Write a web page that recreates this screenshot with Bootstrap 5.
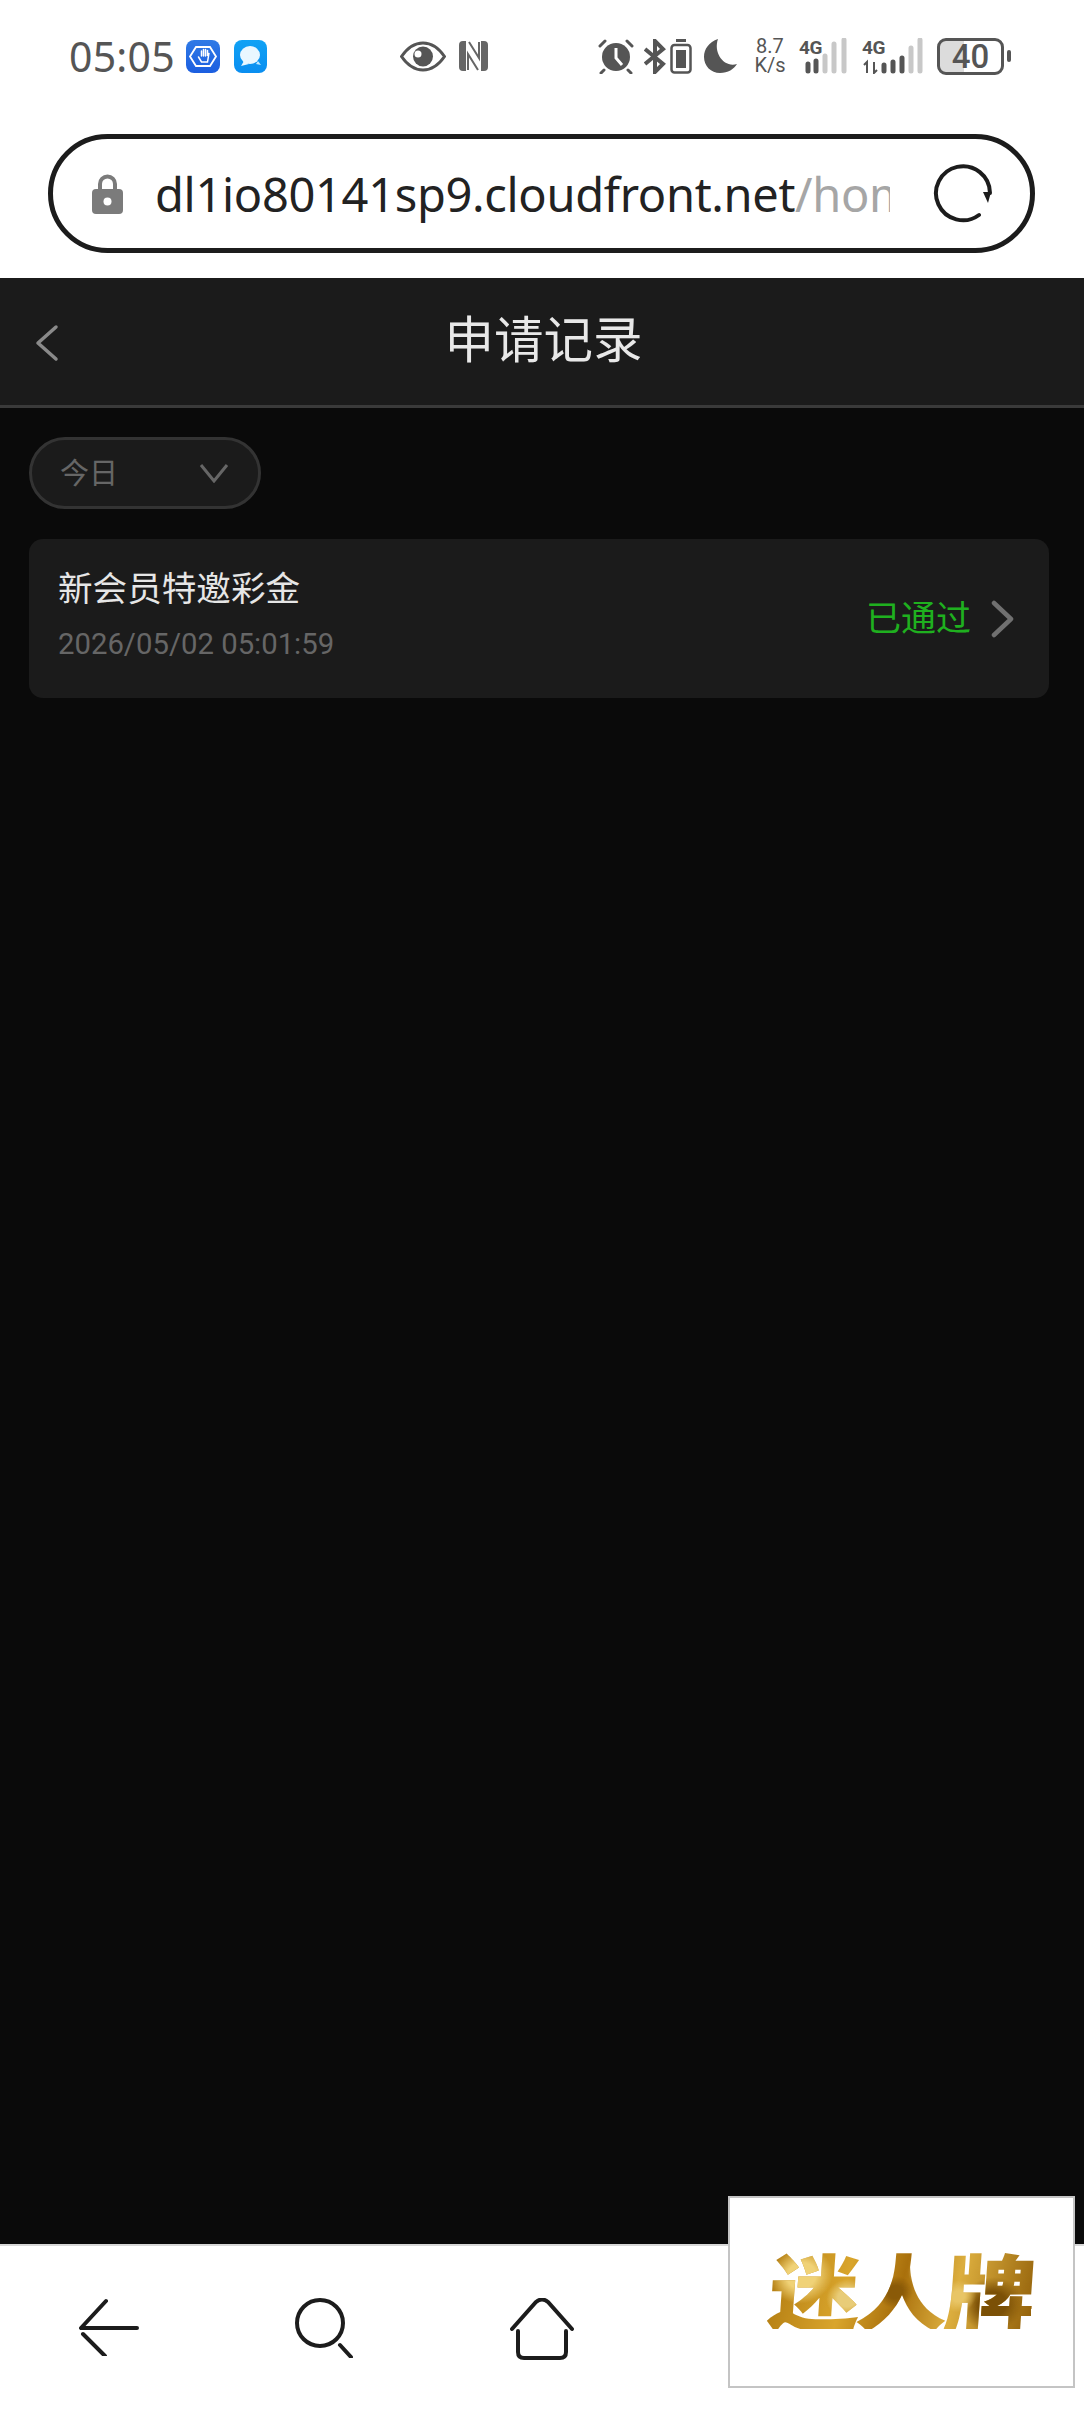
<!DOCTYPE html>
<html lang="zh">
<head>
<meta charset="utf-8">
<title>申请记录</title>
<link rel="stylesheet" href="https://cdn.jsdelivr.net/npm/bootstrap@5.3.0/dist/css/bootstrap.min.css">
<style>
html,body{margin:0;height:2412px;overflow:hidden;background:#0a0a0a}
body{font-family:"Noto Sans","Noto Sans CJK SC",sans-serif}
.shell{height:2412px}
.sbar{height:112px;padding:0 0 0 69px;background:#fff;color:#555}
.sbar svg{display:block;flex:none}
.clock{font-size:41px;line-height:1;width:117px;letter-spacing:.2px;font-family:"Noto Sans",sans-serif}
.gap-msg{margin-left:14px}
.eye{margin-left:133px}
.nfc{margin-left:12px}
.alarm{margin-left:109px}
.bt{margin-left:10px}
.cell{margin-left:3px}
.moon{margin-left:12px}
.speed{margin-left:15px;width:36px;font-size:20px;line-height:19px;text-align:center;color:#555;font-family:"Roboto",sans-serif}
.sig1{margin-left:11px;width:50px}
.sig2{margin-left:13px;width:63px}
.sigbox{position:relative;height:36px}
.sigtxt{font:700 19px/1 "Roboto",sans-serif;color:#555;letter-spacing:-.5px;display:block}
.batt{margin-left:12px;width:67px;height:37px;border:3px solid #555;border-radius:9px;font:500 33px/31px "Roboto",sans-serif;color:#555;text-align:center;background:linear-gradient(90deg,#dcdcdc 0 40%,#fff 40%)}
.batt-tip{width:4px;height:12px;border-radius:2px;background:#555;margin-left:3px}
.urlwrap{height:166px;padding:22px 49px 25px 48px;background:#fff}
.urlpill{height:119px;border:5px solid #1c1c1c;border-radius:60px;padding:0 37px 0 39px}
.urltxt{width:735px;margin-left:32px;overflow:hidden;white-space:nowrap;font-size:47px;line-height:60px;color:#222;font-family:"Noto Sans",sans-serif;letter-spacing:-.32px}
.urltxt span{color:#a6a6a6}
.pagehead{height:130px;background:#1b1b1b;border-bottom:3px solid #3a3a3a;position:relative}
.pagehead h1{font-size:49.5px;line-height:1;font-weight:400;color:#e8e8e8;margin:0 0 3px 3px}
.backbtn{position:absolute;left:35px;top:46px}
.mainarea{height:1836px;background:#0a0a0a;padding:29px 35px 0 29px}
.pickbox{width:232px;height:72px;background:#1b1b1b;border:3px solid #333;border-radius:36px;padding:0 29px 0 28px;color:#666;font-size:29px}
.reccard{height:159px;margin-top:30px;background:#1b1b1b;border-radius:14px;padding:0 35px 0 29px}
.recbody{padding-bottom:10px}
.rectitle{font-size:34.6px;line-height:46px;color:#e6e6e6}
.recdate{font-size:29.3px;line-height:38px;color:#666;margin-top:14px;font-family:"Roboto",sans-serif}
.recstate{font-size:35px;color:#1fb01f;margin-right:20px}
.botnav{height:168px;background:#fff;border-top:2px solid #d8d8d8;position:relative}
.navico{position:absolute;top:52px}
.promo{position:absolute;left:728px;bottom:24px;width:347px;height:192px;background:#fff;border:2px solid #c4c4c4}
.promotxt{font:900 92px/1 "Noto Sans CJK SC",sans-serif;letter-spacing:-4px;transform:skewX(-4deg) scaleY(.9);
background:radial-gradient(circle at 12% 35%,#f0d277 0 6%,transparent 13%),radial-gradient(circle at 30% 62%,#e8cc78 0 5%,transparent 11%),radial-gradient(circle at 48% 55%,#8a5a08 0 5%,transparent 12%),radial-gradient(circle at 60% 30%,#eed48a 0 5%,transparent 12%),radial-gradient(circle at 72% 60%,#e8c566 0 3%,transparent 9%),radial-gradient(circle at 85% 70%,#7b5006 0 6%,transparent 13%),linear-gradient(100deg,#b07a10,#d9a52c 30%,#a9700c 50%,#dcae3e 70%,#93610a);
-webkit-background-clip:text;background-clip:text;color:transparent}
</style>
</head>
<body>
<div class="shell d-flex flex-column">
  <div class="sbar d-flex align-items-center">
    <span class="clock">05:05</span>
    <svg width="34" height="33" viewBox="0 0 34 33"><defs><linearGradient id="g1" x1="0" y1="0" x2="0" y2="1"><stop offset="0" stop-color="#2f7ae6"/><stop offset="1" stop-color="#1b5ee0"/></linearGradient></defs><rect width="34" height="33" rx="8" fill="url(#g1)"/><path d="M10 7h14l6 9.500-6 9.500H10L4 16.500z" fill="none" stroke="#fff" stroke-width="1.800"/><path d="M12.500 17l3 5h6l1.500-9v0l-1.500 3V10.500M19.500 16V9.500M17.500 16V9.500M15.500 16v-5" fill="none" stroke="#fff" stroke-width="1.500" stroke-linecap="round"/></svg>
    <svg class="gap-msg" width="33" height="33" viewBox="0 0 33 33"><defs><linearGradient id="g2" x1="0" y1="0" x2="0" y2="1"><stop offset="0" stop-color="#10a2f5"/><stop offset="1" stop-color="#0a8ef0"/></linearGradient></defs><rect width="33" height="33" rx="8" fill="url(#g2)"/><ellipse cx="16" cy="15" rx="10" ry="9" fill="#e9f7ff"/><path d="M10 21l-3 5 8-2z" fill="#e9f7ff"/><path d="M22 24l5 1-3-4z" fill="#bfe8ff"/></svg>
    <svg class="eye" width="46" height="31" viewBox="0 0 46 31"><path d="M1.500 15.500C8 6 15 2 23 2s15 4 21.500 13.500C38 25 31 29 23 29S8 25 1.500 15.500z" fill="none" stroke="#555" stroke-width="3"/><circle cx="23" cy="15.500" r="10" fill="#555"/><circle cx="18" cy="13" r="3.500" fill="#fff"/></svg>
    <svg class="nfc" width="31" height="32" viewBox="0 0 31 32"><path d="M1 5q0-4 4-4h3v30H5q-4 0-4-4zM30 5q0-4-4-4h-3v30h3q4 0 4-4z" fill="#666"/><path d="M11 2l10 16V2M20 30L10 14v16" fill="none" stroke="#666" stroke-width="2"/></svg>
    <svg class="alarm" width="36" height="35" viewBox="0 0 36 35"><circle cx="18" cy="18" r="14" fill="#555"/><path d="M18 9v10l6 7" fill="none" stroke="#fff" stroke-width="3"/><path d="M2 7l5-5M34 7l-5-5M6 31l-3 3M30 31l3 3" stroke="#555" stroke-width="3" stroke-linecap="round"/></svg>
    <svg class="bt" width="23" height="35" viewBox="0 0 23 35"><path d="M1 10l18 15-8 8V2l8 8L1 25" fill="none" stroke="#555" stroke-width="4"/></svg>
    <svg class="cell" width="22" height="35" viewBox="0 0 22 35"><rect x="6" y="0" width="10" height="3" fill="#555"/><rect x="1.500" y="6" width="19" height="27.500" rx="3" fill="none" stroke="#555" stroke-width="2.500"/><rect x="6" y="11" width="10" height="18" fill="#555"/></svg>
    <svg class="moon" width="33" height="34" viewBox="0 0 33 34"><path d="M14 0C5 3 0 10 0 18c0 9 7 16 16 16 8 0 14-4 17-9-13 4-24-11-19-25z" fill="#555"/></svg>
    <div class="speed">8.7<br>K/s</div>
    <div class="sig1 sigbox"><span class="sigtxt">4G</span><svg width="50" height="36" viewBox="0 0 50 36" class="position-absolute top-0 start-0"><g stroke-linecap="round" stroke-width="5"><path d="M9 33v-7M17 33v-10" stroke="#555"/><path d="M26 33V18M35 33V6" stroke="#c8c8c8"/><path d="M45 33V2" stroke="#c8c8c8"/></g></svg></div>
    <div class="sig2 sigbox"><span class="sigtxt">4G</span><svg width="63" height="36" viewBox="0 0 63 36" class="position-absolute top-0 start-0"><path d="M5 35V24l-3 3M12 24v11l3-3" fill="none" stroke="#555" stroke-width="2"/><g stroke-linecap="round" stroke-width="5"><path d="M22 33v-6M31 33v-9M40 33V20" stroke="#555"/><path d="M49 33V10M58 33V2" stroke="#c8c8c8"/></g></svg></div>
    <div class="batt">40</div>
    <span class="batt-tip"></span>
  </div>
  <div class="urlwrap">
    <div class="urlpill d-flex align-items-center">
      <svg width="31" height="40" viewBox="0 0 31 40" class="flex-none"><path d="M8 18v-8a7.500 7.500 0 0 1 15 0v8" fill="none" stroke="#7b7b7b" stroke-width="4"/><rect y="15" width="31" height="25" rx="4" fill="#7b7b7b"/><circle cx="15.500" cy="27.500" r="4" fill="#fff"/></svg>
      <div class="urltxt">dl1io80141sp9.cloudfront.net<span>/home/record</span></div>
      <svg class="ms-auto" width="60" height="60" viewBox="0 0 60 60"><path d="M46 51A27 27 0 1 1 57 29" fill="none" stroke="#1c1c1c" stroke-width="4" stroke-linecap="round"/><path d="M50 28h8l-3 11z" fill="#1c1c1c"/></svg>
    </div>
  </div>
  <div class="pagehead d-flex align-items-center justify-content-center">
    <svg class="backbtn" width="24" height="38" viewBox="0 0 24 38"><path d="M21 3L3 19l18 16" fill="none" stroke="#8a8a8a" stroke-width="3.500" stroke-linecap="round" stroke-linejoin="round"/></svg>
    <h1>申请记录</h1>
  </div>
  <div class="mainarea">
    <div class="pickbox d-flex align-items-center justify-content-between">
      <span>今日</span>
      <svg width="30" height="20" viewBox="0 0 30 20"><path d="M2 2l13 16L28 2" fill="none" stroke="#666" stroke-width="3"/></svg>
    </div>
    <div class="reccard d-flex align-items-center justify-content-between">
      <div class="recbody">
        <div class="rectitle">新会员特邀彩金</div>
        <div class="recdate">2026/05/02 05:01:59</div>
      </div>
      <div class="d-flex align-items-center">
        <span class="recstate">已通过</span>
        <svg width="23" height="38" viewBox="0 0 23 38"><path d="M3 3l17 16L3 35" fill="none" stroke="#707070" stroke-width="4.500" stroke-linecap="round" stroke-linejoin="round"/></svg>
      </div>
    </div>
  </div>
  <div class="botnav">
    <svg class="navico" style="left:78px" width="62" height="58" viewBox="0 0 62 58"><path d="M28 3L3 30h56M5 36l22 22" fill="none" stroke="#1c1c1c" stroke-width="4" stroke-linecap="round" stroke-linejoin="round"/></svg>
    <svg class="navico" style="left:295px" width="58" height="60" viewBox="0 0 58 60"><ellipse cx="25" cy="25" rx="23" ry="23" fill="none" stroke="#1c1c1c" stroke-width="4"/><path d="M45 47l11 12" stroke="#1c1c1c" stroke-width="4" stroke-linecap="round"/></svg>
    <svg class="navico" style="left:510px" width="64" height="62" viewBox="0 0 64 62"><path d="M2 31L26 4q6-5 12 0l24 27M8 33v21q0 6 6 6h36q6 0 6-6V33" fill="none" stroke="#1c1c1c" stroke-width="4" stroke-linecap="round"/></svg>
    <div class="promo d-flex align-items-center justify-content-center pb-2">
      <span class="promotxt">迷人牌</span>
    </div>
  </div>
</div>
<script src="https://cdn.jsdelivr.net/npm/bootstrap@5.3.0/dist/js/bootstrap.bundle.min.js"></script>
</body>
</html>
